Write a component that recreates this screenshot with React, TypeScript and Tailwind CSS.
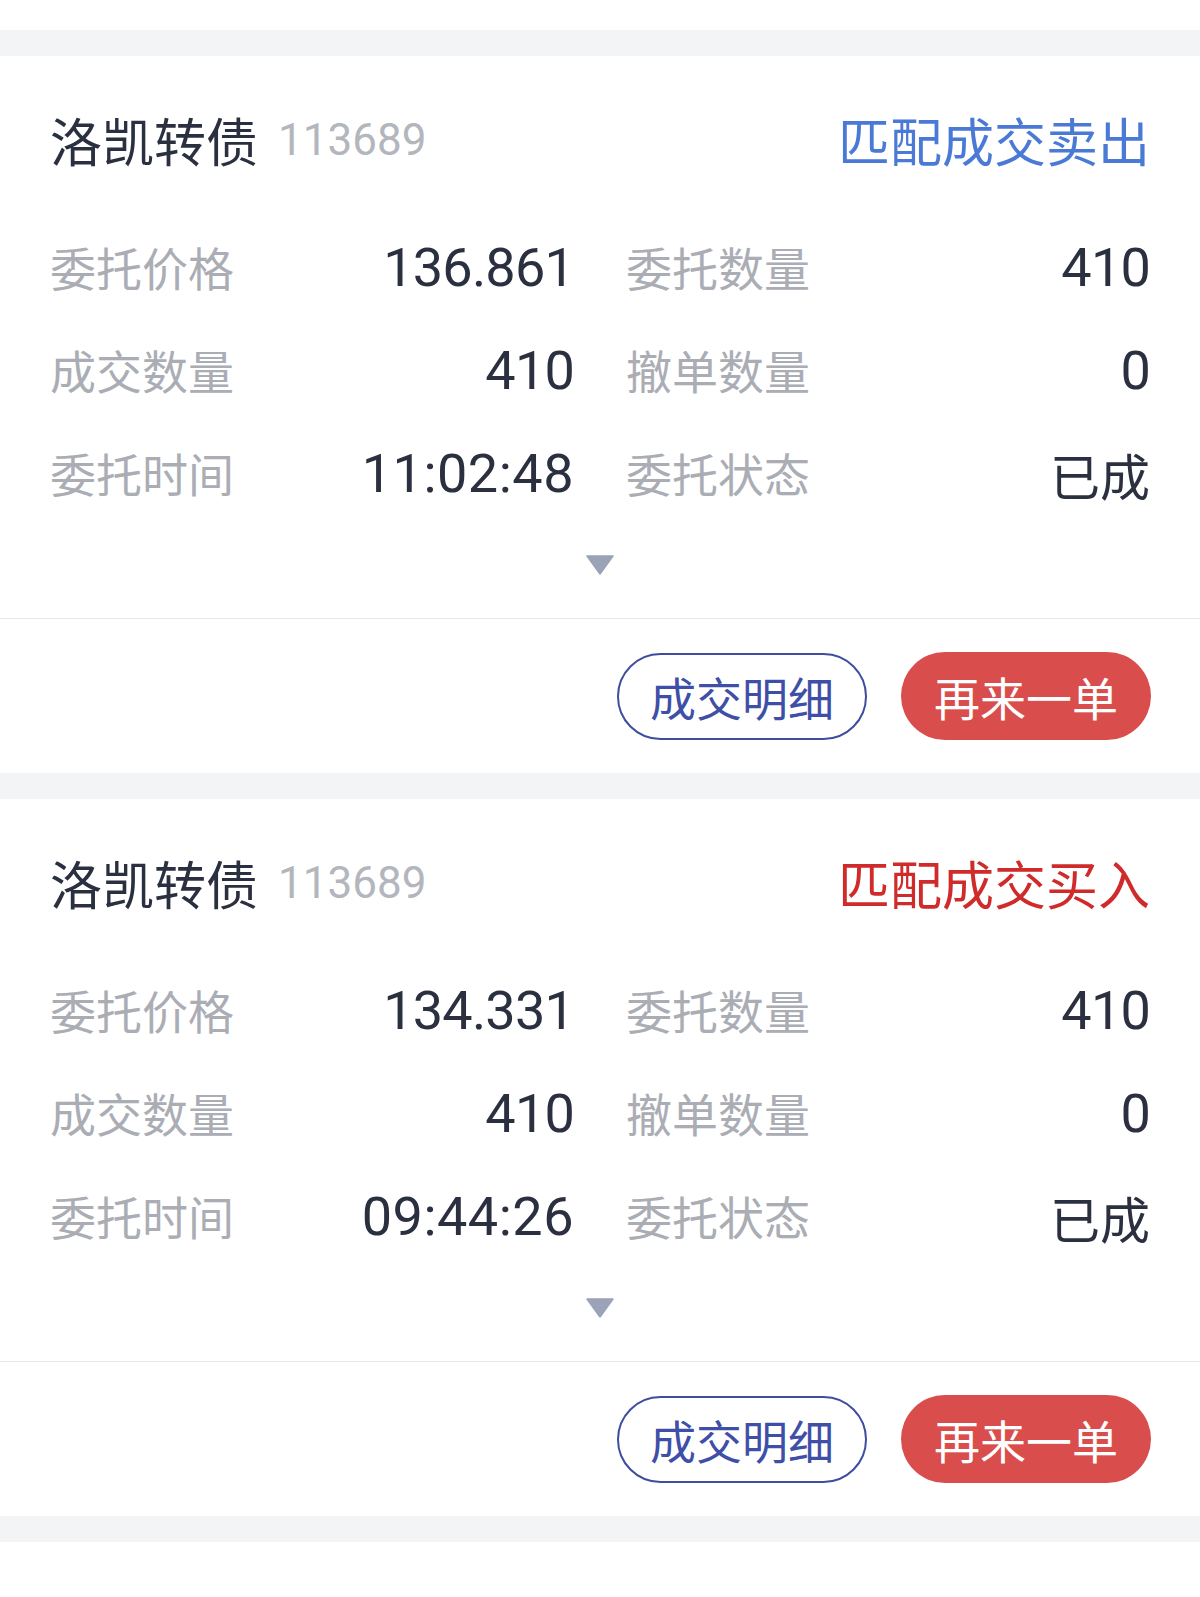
import React from "react";

const CJK = '"Noto Sans CJK SC", "Noto Sans", sans-serif';
const NUM = 'Roboto, "Noto Sans CJK SC", sans-serif';

type Order = {
  name: string;
  code: string;
  status: string;
  statusColor: "blue" | "red";
  price: string;
  qty: string;
  filled: string;
  cancel: string;
  time: string;
  state: string;
};

const orders: Order[] = [
  {
    name: "洛凯转债",
    code: "113689",
    status: "匹配成交卖出",
    statusColor: "blue",
    price: "136.861",
    qty: "410",
    filled: "410",
    cancel: "0",
    time: "11:02:48",
    state: "已成",
  },
  {
    name: "洛凯转债",
    code: "113689",
    status: "匹配成交买入",
    statusColor: "red",
    price: "134.331",
    qty: "410",
    filled: "410",
    cancel: "0",
    time: "09:44:26",
    state: "已成",
  },
];

function Cell({
  label,
  value,
  kind = "num",
}: {
  label: string;
  value: string;
  kind?: "num" | "time" | "cjk";
}) {
  return (
    <div className="flex h-[103px] items-center justify-between">
      <span
        className="-translate-y-[2px] text-[46px] leading-none text-[#abadb5]"
        style={{ fontFamily: CJK }}
      >
        {label}
      </span>
      {kind === "cjk" ? (
        <span className="text-[50px] leading-none text-[#2b3040]" style={{ fontFamily: CJK }}>
          {value}
        </span>
      ) : kind === "time" ? (
        <span
          className="text-[54px] leading-none tracking-[0.5px] text-[#2b3040]"
          style={{ fontFamily: NUM }}
        >
          {value}
        </span>
      ) : (
        <span
          className="text-[54px] leading-none tracking-[-0.8px] text-[#2b3040]"
          style={{ fontFamily: NUM }}
        >
          {value}
        </span>
      )}
    </div>
  );
}

function Card({ o }: { o: Order }) {
  return (
    <div className="bg-white">
      <div className="px-[50px]">
        <div className="mt-[56px] flex h-[56px] items-center justify-between">
          <div className="flex items-center">
            <span className="text-[52px] leading-none text-[#2b3040]" style={{ fontFamily: CJK }}>
              {o.name}
            </span>
            <span
              className="ml-[20px] text-[44px] leading-none text-[#b3b6bd]"
              style={{ fontFamily: NUM }}
            >
              {o.code}
            </span>
          </div>
          <span
            className={
              o.statusColor === "blue"
                ? "text-[52px] leading-none text-[#4a7ad6]"
                : "text-[52px] leading-none text-[#cf2b2b]"
            }
            style={{ fontFamily: CJK }}
          >
            {o.status}
          </span>
        </div>
        <div className="mt-[48px] grid grid-cols-2 gap-x-[52px]">
          <Cell label="委托价格" value={o.price} />
          <Cell label="委托数量" value={o.qty} />
          <Cell label="成交数量" value={o.filled} />
          <Cell label="撤单数量" value={o.cancel} />
          <Cell label="委托时间" value={o.time} kind="time" />
          <Cell label="委托状态" value={o.state} kind="cjk" />
        </div>
        <div className="mt-[30px] flex justify-center">
          <svg width="28" height="20" viewBox="0 0 28 20">
            <path
              d="M1 1 L27 1 L14 19 Z"
              fill="#9aa3b8"
              stroke="#9aa3b8"
              strokeWidth="1.5"
              strokeLinejoin="round"
            />
          </svg>
        </div>
      </div>
      <div className="mt-[43px] h-px bg-[#e6e7ea]" />
      <div className="flex h-[154px] items-center justify-end gap-[34px] px-[49px]">
        <button
          className="flex h-[87px] w-[250px] items-center justify-center rounded-full border-2 border-[#3f4d9e] bg-white text-[46px] leading-none text-[#3f4fa8]"
          style={{ fontFamily: CJK }}
        >
          成交明细
        </button>
        <button
          className="flex h-[88px] w-[250px] items-center justify-center rounded-full bg-[#d94e4c] text-[46px] leading-none text-white"
          style={{ fontFamily: CJK }}
        >
          再来一单
        </button>
      </div>
    </div>
  );
}

export default function App() {
  return (
    <div className="min-h-[1597px] w-[1200px] bg-white">
      <div className="h-[30px] bg-white" />
      <div className="h-[26px] bg-[#f3f4f6]" />
      <Card o={orders[0]} />
      <div className="h-[26px] bg-[#f3f4f6]" />
      <Card o={orders[1]} />
      <div className="h-[26px] bg-[#f3f4f6]" />
    </div>
  );
}
